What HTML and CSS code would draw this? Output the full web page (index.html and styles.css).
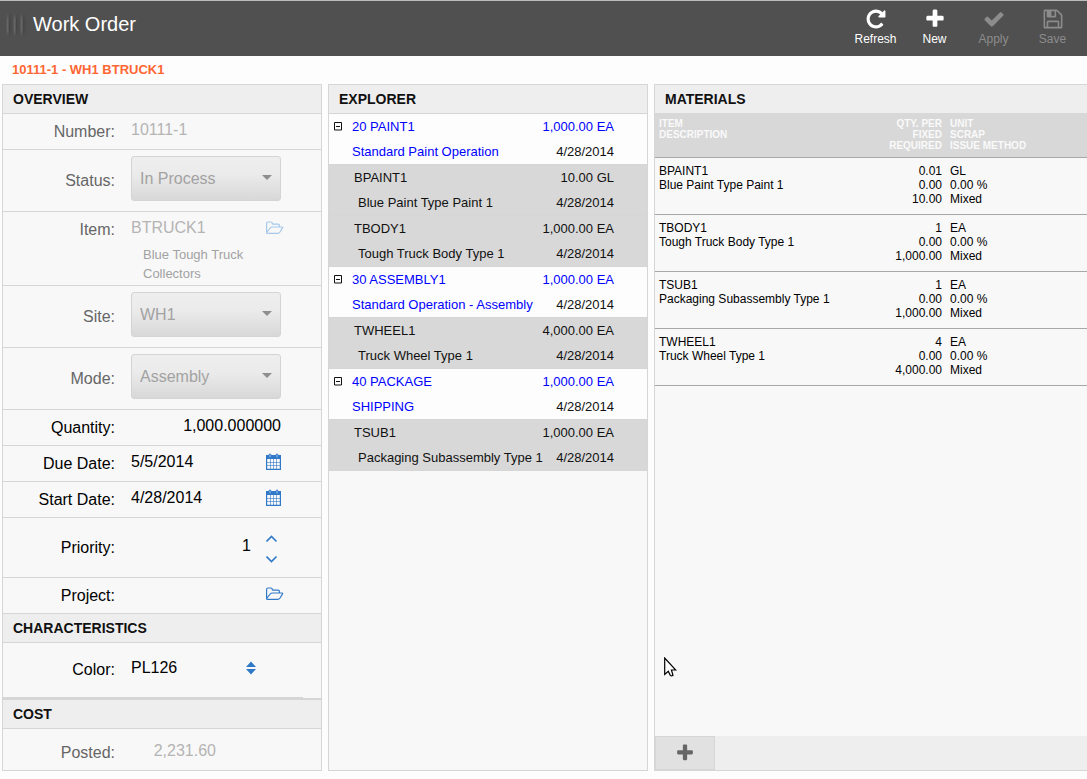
FILE: index.html
```html
<!DOCTYPE html>
<html lang="en">
<head>
<meta charset="UTF-8">
<meta name="viewport" content="width=device-width, initial-scale=1.0">
<title>Work Order</title>
<link rel="stylesheet" href="styles.css">
</head>
<body>

<!-- shared icons -->
<svg class="sprite" aria-hidden="true">
    <symbol id="i-refresh" viewBox="0 0 1792 1792"><path d="M1664 256v448q0 26-19 45t-45 19h-448q-42 0-59-40-17-39 14-69l138-138q-148-137-349-137-104 0-198.500 40.500t-163.500 109.500-109.500 163.500-40.500 198.500 40.500 198.500 109.500 163.500 163.500 109.500 198.500 40.500q119 0 225-52t179-147q7-10 23-12 15 0 25 9l137 138q9 8 9.500 20.500t-7.500 22.500q-109 132-264 204.500t-327 72.500q-156 0-298-61t-245-164-164-245-61-298 61-298 164-245 245-164 298-61q147 0 284.500 55.500t244.500 156.500l130-129q29-31 70-14 39 17 39 59z"/></symbol>
    <symbol id="i-plus" viewBox="0 0 1792 1792"><path d="M1600 736v192q0 40-28 68t-68 28h-416v416q0 40-28 68t-68 28h-192q-40 0-68-28t-28-68v-416h-416q-40 0-68-28t-28-68v-192q0-40 28-68t68-28h416v-416q0-40 28-68t68-28h192q40 0 68 28t28 68v416h416q40 0 68 28t28 68z"/></symbol>
    <symbol id="i-check" viewBox="0 0 1792 1792"><path d="M1671 566q0 40-28 68l-724 724-136 136q-28 28-68 28t-68-28l-136-136-362-362q-28-28-28-68t28-68l136-136q28-28 68-28t68 28l294 295 656-657q28-28 68-28t68 28l136 136q28 28 28 68z"/></symbol>
    <symbol id="i-save" viewBox="0 0 1792 1792"><path d="M512 1536h768v-384h-768v384zm896 0h128v-896q0-14-10-38.500t-20-34.500l-281-281q-10-10-34-20t-39-10v416q0 40-28 68t-68 28h-576q-40 0-68-28t-28-68v-416h-128v1280h128v-416q0-40 28-68t68-28h832q40 0 68 28t28 68v416zm-384-928v-320q0-13-9.500-22.500t-22.500-9.500h-192q-13 0-22.500 9.500t-9.500 22.500v320q0 13 9.500 22.500t22.500 9.500h192q13 0 22.500-9.500t9.500-22.500zm640 32v928q0 40-28 68t-68 28h-1344q-40 0-68-28t-28-68v-1344q0-40 28-68t68-28h928q40 0 88 20t76 48l280 280q28 28 48 76t20 88z"/></symbol>
    <symbol id="i-folder" viewBox="0 0 18 16"><path d="M0.600 12.500V3.500Q0.600 2 2 2H5Q6.200 2 6.200 3.300Q6.200 4.200 7.200 4.200H12Q13.400 4.200 13.400 5.600V7M0.600 12.500L4.200 8Q5 7 6.200 7H16Q17.100 7 16.400 8.100L14 12Q13 13.400 11.800 13.400H1.800Q0.600 13.400 0.600 12.500Z" fill="none" stroke="currentColor" stroke-width="1.200"/></symbol>
    <symbol id="i-calendar" viewBox="0 0 16 18"><path d="M0.600 2.600H14.400V16.400H0.600Z" fill="none" stroke="currentColor" stroke-width="1.200"/><path d="M0 2.500H15V6H0Z"/><path d="M4.500 6V16M7.500 6V16M10.500 6V16M1 9.500H14M1 12.500H14" stroke="currentColor" stroke-width="0.600"/><rect x="3" y="1" width="2" height="4" rx="1" fill="#9fc3ea" stroke="currentColor"/><rect x="10" y="1" width="2" height="4" rx="1" fill="#9fc3ea" stroke="currentColor"/></symbol>
    <symbol id="i-up" viewBox="0 0 12 8"><path d="M0.500 6.500L5.500 1.500L10.500 6.500" fill="none" stroke="currentColor" stroke-width="1.600"/></symbol>
    <symbol id="i-down" viewBox="0 0 12 8"><path d="M0.500 1.500L5.500 6.500L10.500 1.500" fill="none" stroke="currentColor" stroke-width="1.600"/></symbol>
    <symbol id="i-minus" viewBox="0 0 9 9"><path d="M0.500 0.500H7.500V8H0.500ZM2 4.500H6" fill="none" stroke="currentColor"/></symbol>
</svg>

<header class="topbar">
    <span class="grip"></span>
    <h1>Work Order</h1>
    <nav class="tools">
        <button type="button"><svg><use href="#i-refresh"/></svg>Refresh</button>
        <button type="button"><svg><use href="#i-plus"/></svg>New</button>
        <button type="button" disabled><svg><use href="#i-check"/></svg>Apply</button>
        <button type="button" disabled><svg><use href="#i-save"/></svg>Save</button>
    </nav>
</header>

<p class="subtitle">10111-1 - WH1 BTRUCK1</p>

<main class="columns">
    <form class="panel">
        <h2>Overview</h2>
        <div class="row off">
            <label for="number">Number:</label>
            <div class="field"><input type="text" id="number" value="10111-1" disabled></div>
        </div>
        <div class="row tall off">
            <label for="status">Status:</label>
            <div class="drop"><select id="status" disabled><option>In Process</option></select></div>
        </div>
        <div class="row item off">
            <label for="item">Item:</label>
            <div>
                <div class="field">
                    <input type="text" id="item" value="BTRUCK1" disabled>
                    <button type="button" aria-label="Browse items" disabled><svg class="folder"><use href="#i-folder"/></svg></button>
                </div>
                <p class="desc">Blue Tough Truck Collectors</p>
            </div>
        </div>
        <div class="row tall off">
            <label for="site">Site:</label>
            <div class="drop"><select id="site" disabled><option>WH1</option></select></div>
        </div>
        <div class="row tall off">
            <label for="mode">Mode:</label>
            <div class="drop"><select id="mode" disabled><option>Assembly</option></select></div>
        </div>
        <div class="row">
            <label for="quantity">Quantity:</label>
            <div class="field"><input type="text" id="quantity" class="num wide" value="1,000.000000"></div>
        </div>
        <div class="row">
            <label for="due">Due Date:</label>
            <div class="field">
                <input type="text" id="due" value="5/5/2014">
                <button type="button" aria-label="Pick due date"><svg class="calendar"><use href="#i-calendar"/></svg></button>
            </div>
        </div>
        <div class="row">
            <label for="start">Start Date:</label>
            <div class="field">
                <input type="text" id="start" value="4/28/2014">
                <button type="button" aria-label="Pick start date"><svg class="calendar"><use href="#i-calendar"/></svg></button>
            </div>
        </div>
        <div class="row priority">
            <label for="priority">Priority:</label>
            <div class="field">
                <input type="text" id="priority" class="num" value="1">
                <span class="spin">
                    <button type="button" aria-label="Raise priority"><svg><use href="#i-up"/></svg></button>
                    <button type="button" aria-label="Lower priority"><svg><use href="#i-down"/></svg></button>
                </span>
            </div>
        </div>
        <div class="row">
            <label for="project">Project:</label>
            <div class="field">
                <input type="text" id="project">
                <button type="button" aria-label="Browse projects"><svg class="folder"><use href="#i-folder"/></svg></button>
            </div>
        </div>

        <h2>Characteristics</h2>
        <div class="characteristics">
            <div class="row color">
                <label for="color">Color:</label>
                <div class="field">
                    <div class="pick">
                        <select id="color"><option>PL126</option></select>
                        <svg viewBox="0 0 10 14"><path d="M0 6L5 0.500L10 6ZM0 8L5 13.500L10 8Z"/></svg>
                    </div>
                </div>
            </div>
        </div>

        <h2>Cost</h2>
        <div class="row posted off">
            <label for="posted">Posted:</label>
            <div class="field"><input type="text" id="posted" class="num" value="2,231.60" disabled></div>
        </div>
    </form>

    <section class="panel">
        <h2>Explorer</h2>
        <ul class="tree">
            <li class="op">
                <button type="button" aria-label="Collapse"><svg><use href="#i-minus"/></svg></button>
                <a href="#">20 PAINT1</a><a href="#" class="end">1,000.00 EA</a>
                <a href="#" class="sub">Standard Paint Operation</a><span class="end">4/28/2014</span>
            </li>
            <li class="mat"><span>BPAINT1</span><span class="end">10.00 GL</span><span class="sub">Blue Paint Type Paint 1</span><span class="end">4/28/2014</span></li>
            <li class="mat"><span>TBODY1</span><span class="end">1,000.00 EA</span><span class="sub">Tough Truck Body Type 1</span><span class="end">4/28/2014</span></li>
            <li class="op">
                <button type="button" aria-label="Collapse"><svg><use href="#i-minus"/></svg></button>
                <a href="#">30 ASSEMBLY1</a><a href="#" class="end">1,000.00 EA</a>
                <a href="#" class="sub">Standard Operation - Assembly</a><span class="end">4/28/2014</span>
            </li>
            <li class="mat"><span>TWHEEL1</span><span class="end">4,000.00 EA</span><span class="sub">Truck Wheel Type 1</span><span class="end">4/28/2014</span></li>
            <li class="op">
                <button type="button" aria-label="Collapse"><svg><use href="#i-minus"/></svg></button>
                <a href="#">40 PACKAGE</a><a href="#" class="end">1,000.00 EA</a>
                <a href="#" class="sub">SHIPPING</a><span class="end">4/28/2014</span>
            </li>
            <li class="mat"><span>TSUB1</span><span class="end">1,000.00 EA</span><span class="sub">Packaging Subassembly Type 1</span><span class="end">4/28/2014</span></li>
        </ul>
    </section>

    <section class="panel materials">
        <h2>Materials</h2>
        <table>
            <thead>
                <tr><th class="c-item">ITEM<br>DESCRIPTION</th><th class="c-qty">QTY. PER<br>FIXED<br>REQUIRED</th><th>UNIT<br>SCRAP<br>ISSUE METHOD</th></tr>
            </thead>
            <tbody>
                <tr><td>BPAINT1<br>Blue Paint Type Paint 1</td><td class="c-qty">0.01<br>0.00<br>10.00</td><td>GL<br>0.00 %<br>Mixed</td></tr>
                <tr><td>TBODY1<br>Tough Truck Body Type 1</td><td class="c-qty">1<br>0.00<br>1,000.00</td><td>EA<br>0.00 %<br>Mixed</td></tr>
                <tr><td>TSUB1<br>Packaging Subassembly Type 1</td><td class="c-qty">1<br>0.00<br>1,000.00</td><td>EA<br>0.00 %<br>Mixed</td></tr>
                <tr><td>TWHEEL1<br>Truck Wheel Type 1</td><td class="c-qty">4<br>0.00<br>4,000.00</td><td>EA<br>0.00 %<br>Mixed</td></tr>
            </tbody>
        </table>
        <div class="actions">
            <button type="button" aria-label="Add material"><svg><use href="#i-plus"/></svg></button>
        </div>
        <svg class="pointer" viewBox="0 0 13 20" aria-hidden="true"><path d="M0.700 1V17.500L4.300 14.200L6.300 18.300Q7.500 19.500 9 18.300L7.400 13H11.800Z" fill="#fff" stroke="#000" stroke-width="1.200"/></svg>
    </section>
</main>

</body>
</html>
```

FILE: styles.css
```css
* {
    box-sizing: border-box;
}
body {
    display: flex;
    flex-direction: column;
    min-height: 100vh;
    margin: 0;
    background: #fdfdfd;
    color: #111;
    font-family: "Liberation Sans", Arial, sans-serif;
    font-size: 13px;
}
h1, h2, p, ul {
    margin: 0;
    padding: 0;
}
button, input, select {
    margin: 0;
    padding: 0;
    border: 0;
    background: none;
    color: inherit;
    font: inherit;
}
svg {
    display: block;
    fill: currentColor;
}
.sprite {
    position: absolute;
    width: 0;
    height: 0;
}

/* top bar */
.topbar {
    display: flex;
    align-items: flex-start;
    height: 56px;
    padding: 0 5px 0 6px;
    border-top: 1px solid #bcbcbc;
    background: #505050;
    color: #fff;
}
.grip {
    width: 21px;
    height: 24px;
    margin-top: 12px;
    background: repeating-linear-gradient(90deg, #505050 0, #6e6e6e 2px, #454545 3px, #505050 7px);
    -webkit-mask: linear-gradient(transparent, #000 30%, #000 70%, transparent);
    mask: linear-gradient(transparent, #000 30%, #000 70%, transparent);
}
.topbar h1 {
    flex: 1;
    padding: 11px 6px;
    font-size: 20px;
    font-weight: normal;
    line-height: 24px;
}
.tools {
    display: flex;
}
.tools button {
    display: flex;
    flex-direction: column;
    align-items: center;
    width: 59px;
    padding-top: 7px;
    font-size: 12px;
    line-height: 16px;
}
.tools button:disabled {
    color: #8c8c8c;
}
.tools svg {
    width: 22px;
    height: 22px;
    margin-bottom: 1px;
}
.subtitle {
    padding: 0 12px;
    color: #ff6633;
    font-weight: bold;
    line-height: 28px;
}

/* panels */
.columns {
    display: grid;
    grid-template-columns: 320px 320px 1fr;
    gap: 6px;
    flex: 1;
    padding: 0 0 8px 2px;
}
.panel {
    border: 1px solid #d6d6d6;
    background: #f8f8f8;
}
.panel h2 {
    padding: 0 10px;
    background: #eee;
    font-size: 14px;
    line-height: 28px;
    text-transform: uppercase;
}
.row ~ h2,
.characteristics ~ h2 {
    border-top: 1px solid #d6d6d6;
}

/* overview form */
.row {
    display: grid;
    grid-template-columns: 112px 1fr;
    column-gap: 16px;
    align-items: center;
    height: 36px;
    border-top: 1px solid #d6d6d6;
    color: #000;
    font-size: 16px;
    line-height: 18px;
}
.row label {
    text-align: right;
}
.row.off label {
    color: #666;
}
.field {
    display: flex;
    align-items: center;
    gap: 15px;
    padding-bottom: 4px;
    color: #3079c8;
}
.field input {
    width: 120px;
    height: 18px;
    color: #000;
}
.field input.wide {
    width: 150px;
}
.field input.num {
    text-align: right;
}
.field input:disabled {
    color: #b4b4b4;
}
.field button:disabled {
    color: #a5c8ec;
}
.folder {
    width: 18px;
    height: 16px;
}
.calendar {
    width: 16px;
    height: 18px;
}
.tall {
    height: 62px;
}
.drop {
    position: relative;
    width: 150px;
    margin-bottom: 4px;
}
.drop select {
    display: block;
    width: 150px;
    height: 45px;
    padding: 0 8px;
    border: 1px solid #d4d4d4;
    border-radius: 3px;
    background: linear-gradient(#eee, #ebebeb 40%, #d8d8d8);
    color: #a2a2a2;
    opacity: 1;
    appearance: none;
}
.drop::after {
    content: "";
    position: absolute;
    top: 19px;
    right: 9px;
    border: 5px solid transparent;
    border-top-color: #8e8e8e;
    border-bottom: 0;
}
.item {
    height: 74px;
    align-items: start;
}
.item label {
    padding-top: 9px;
}
.item .field {
    padding: 7px 0 0;
}
.desc {
    width: 130px;
    margin: 8px 0 0 12px;
    color: #a2a2a2;
    font-size: 13px;
    line-height: 19px;
}
.priority {
    height: 60px;
}
.spin {
    display: grid;
    gap: 12px;
    padding-top: 6px;
}
.spin svg {
    width: 12px;
    height: 8px;
}
.characteristics {
    border-bottom: 1px solid #d6d6d6;
}
.color {
    height: 56px;
    position: relative;
    border-bottom: 1px solid transparent;
}
.color::after {
    content: "";
    position: absolute;
    bottom: -1px;
    left: 0;
    width: 300px;
    border-bottom: 1px solid #d6d6d6;
}
.pick {
    position: relative;
}
.pick select {
    width: 125px;
    height: 20px;
    color: #000;
    appearance: none;
}
.pick svg {
    position: absolute;
    top: 3px;
    right: 0;
    width: 10px;
    height: 14px;
    pointer-events: none;
}
.posted {
    height: 42px;
    padding-top: 6px;
}
.posted .field input {
    width: 85px;
}

/* explorer tree */
.tree {
    border-bottom: 1px solid #d6d6d6;
    list-style: none;
    line-height: 25px;
}
.tree li {
    display: grid;
    grid-template-columns: 18px 1fr auto;
    padding: 0 33px 0 5px;
    border-top: 1px solid #d6d6d6;
    white-space: nowrap;
}
.tree .sub {
    grid-column: 1 / 3;
}
.tree .end {
    text-align: right;
}
.op {
    background: #fdfdfd;
}
.op a {
    color: #0000ff;
    text-decoration: none;
}
.op .sub {
    padding-left: 18px;
}
.op svg {
    width: 9px;
    height: 9px;
}
.mat {
    background: #d8d8d8;
}
.mat span:first-child {
    grid-column: 1 / 3;
    padding-left: 20px;
}
.mat .sub {
    padding-left: 24px;
}

/* materials */
.materials {
    position: relative;
    display: flex;
    flex-direction: column;
    border-right: 0;
}
.materials table {
    width: 100%;
    border-spacing: 0;
    color: #000;
    font-size: 12px;
    line-height: 14px;
}
.materials th {
    padding: 5px 4px 6px;
    border-bottom: 1px solid #a8a8a8;
    background: #d8d8d8;
    color: #fafafa;
    font-size: 10px;
    line-height: 11px;
    text-align: left;
    vertical-align: top;
}
.materials td {
    padding: 6px 4px 8px;
    border-bottom: 1px solid #a8a8a8;
    vertical-align: top;
}
.materials .c-item {
    width: 207px;
}
.materials .c-qty {
    width: 84px;
    text-align: right;
}
.actions {
    margin-top: auto;
    background: #eee;
}
.actions button {
    display: grid;
    place-items: center;
    width: 60px;
    height: 34px;
    border: 1px solid #d6d6d6;
    background: #e1e1e1;
    color: #666;
}
.actions svg {
    width: 20px;
    height: 20px;
}
.pointer {
    position: absolute;
    bottom: 93px;
    left: 9px;
    width: 13px;
    height: 20px;
}
```
